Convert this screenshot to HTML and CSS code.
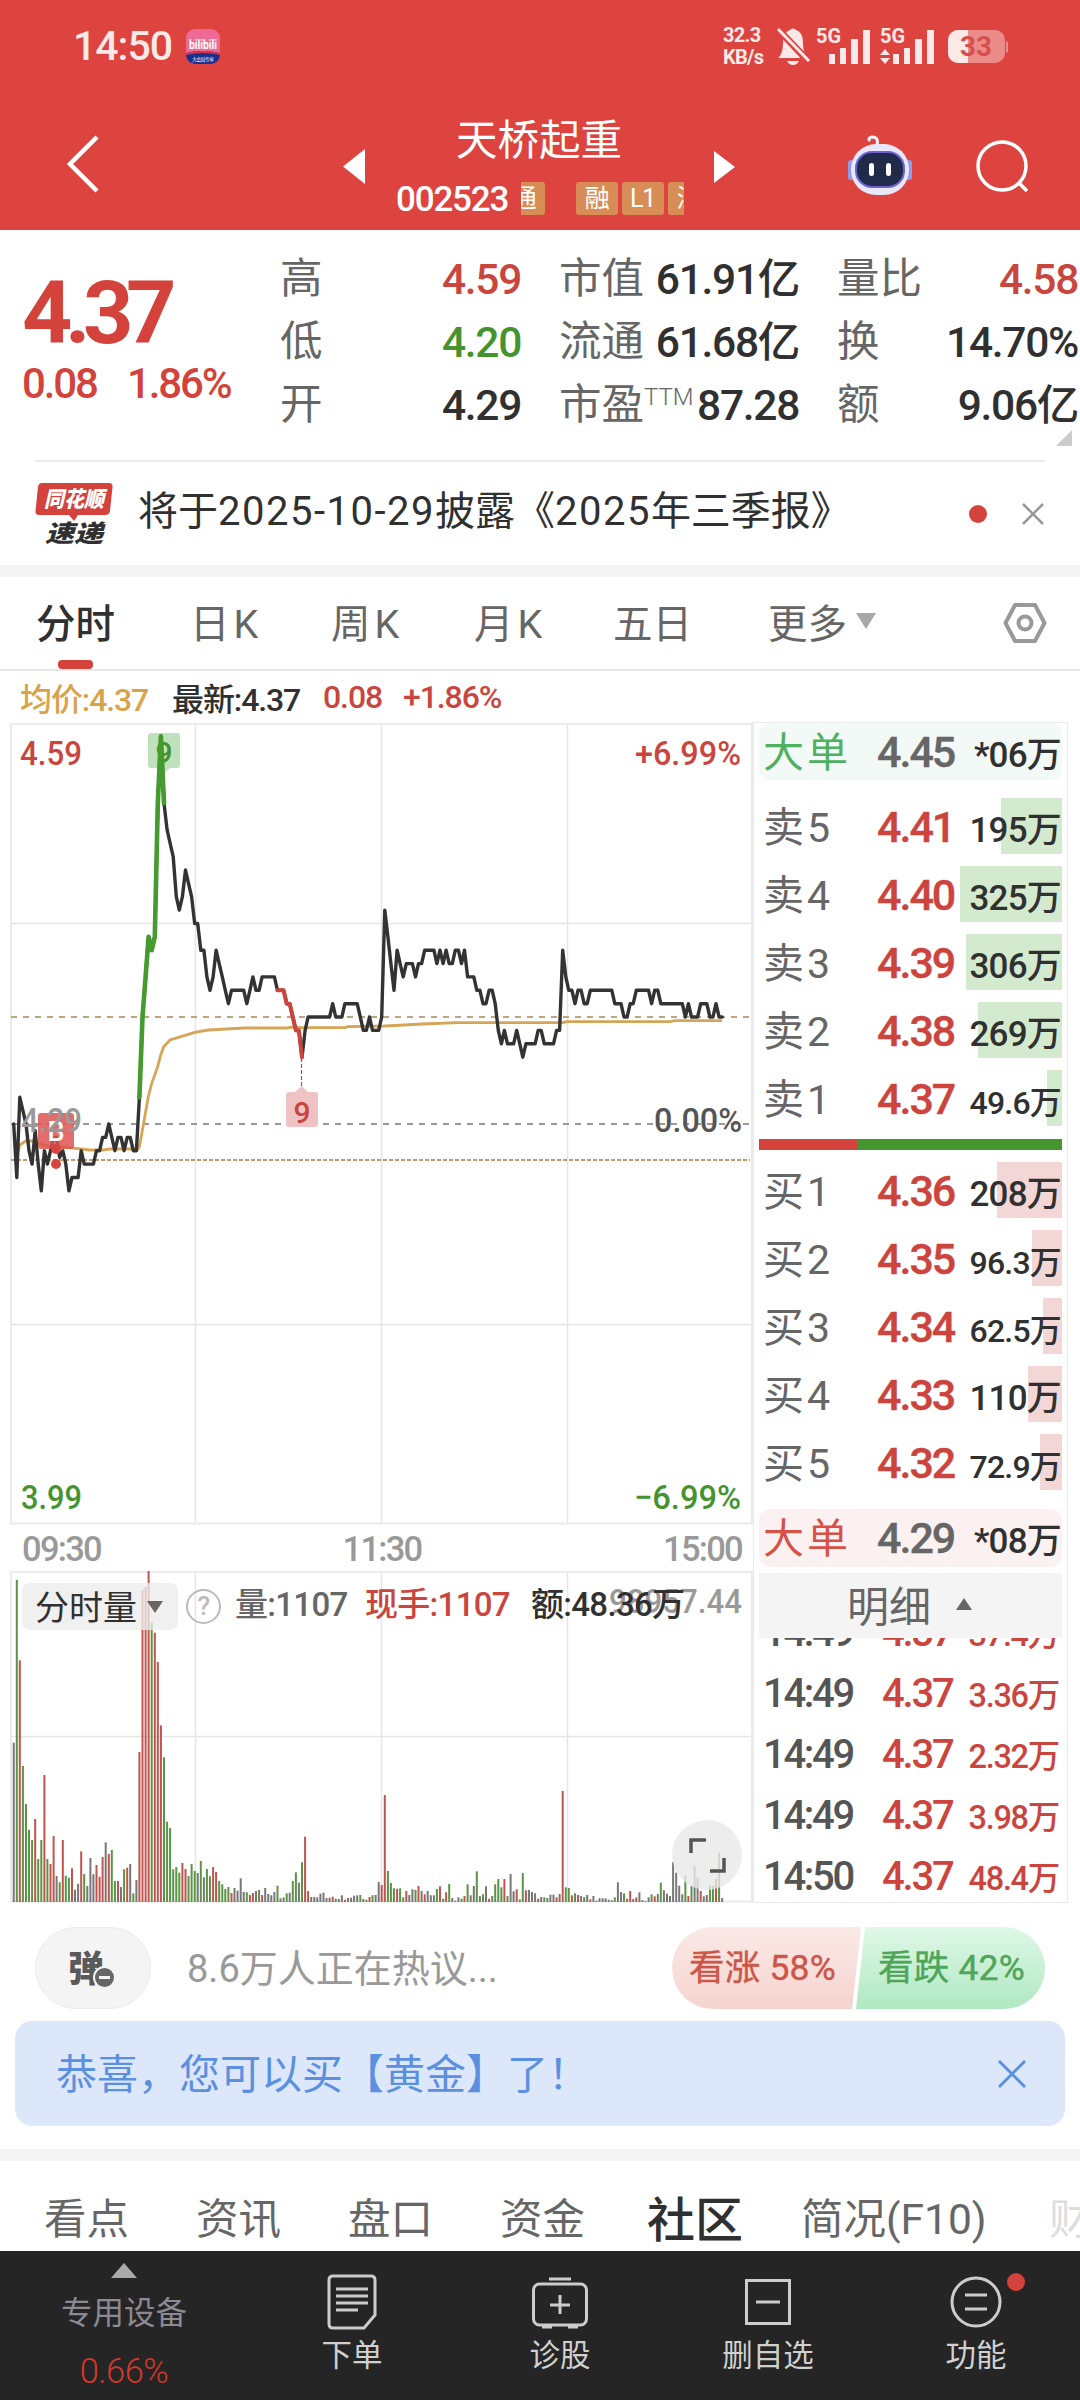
FILE: index.html
```html
<!DOCTYPE html>
<html lang="zh-CN">
<head>
  <meta charset="UTF-8">
  <meta name="viewport" content="width=device-width, initial-scale=1.0">
  <title>天桥起重 002523</title>
  <link rel="stylesheet" href="styles.css">
</head>
<body>
  <header class="top">
    <div class="status">
      <span class="clock">14:50</span>
      <svg class="app-icon" width="34" height="35" viewBox="0 0 34 35">
        <defs><clipPath id="app"><rect width="34" height="35" rx="9"/></clipPath></defs>
        <g clip-path="url(#app)">
          <rect width="34" height="35" fill="#ee6a95"/>
          <path d="M0 24 Q17 20 34 24 V35 H0Z" fill="#1b2f8c"/>
          <path d="M0 24 Q17 20 34 24 V26 Q17 22 0 26Z" fill="#d8354f"/>
        </g>
        <text x="17" y="20" class="app-name" textLength="28" lengthAdjust="spacingAndGlyphs">bilibili</text>
        <text x="17" y="32" class="app-sub" textLength="22">大会员专享</text>
      </svg>
      <div class="status-right">
        <div class="speed"><span>32.3</span><span>KB/s</span></div>
        <svg width="232" height="40" viewBox="776 25 232 40">
          <g fill="#fbe9e8">
            <path d="M778 57 Q783 53 783 42 Q783 31 790 29 Q793 26 796 29 Q803 31 803 42 Q803 53 808 57Z"/>
            <path d="M787 60 h12 q-2 4 -6 4 t-6 -4z"/>
            <path d="M829 53h6v10h-6zM840 47h6v16h-6zM851 38h7v25h-7zM863 29h7v34h-7z"/>
            <path d="M893 53h6v10h-6zM904 47h6v16h-6zM915 38h7v25h-7zM927 29h7v34h-7z"/>
            <path d="M880 54l5-6 5 6zM880 57l5 6 5-6z"/>
          </g>
          <path d="M776 26 L810 62" stroke="#dd4440" stroke-width="7"/>
          <path d="M778 28 L809 60" stroke="#fbe9e8" stroke-width="3"/>
          <text x="816" y="42" class="g5" textLength="25" lengthAdjust="spacingAndGlyphs">5G</text>
          <text x="880" y="42" class="g5" textLength="25" lengthAdjust="spacingAndGlyphs">5G</text>
          <rect x="948" y="29" width="57" height="33" rx="10" fill="#ec8c8a"/>
          <path d="M958 29 H968 V62 H958 A10 10 0 0 1 948 52 V39 A10 10 0 0 1 958 29Z" fill="#fbe9e8"/>
          <path d="M1006 40 q3 1 3 6 t-3 6z" fill="#ec8c8a"/>
          <text x="960" y="55" class="battery" textLength="32" lengthAdjust="spacingAndGlyphs">33</text>
        </svg>
      </div>
    </div>
    <div class="titlebar">
      <svg class="back" width="40" height="60" viewBox="0 0 40 60"><path d="M33 3 L6 30 L33 57" fill="none" stroke="#fff" stroke-width="4.500"/></svg>
      <svg class="prev" width="22" height="36" viewBox="0 0 22 36"><path d="M22 0V35L0 17.5Z" fill="#fff"/></svg>
      <div class="stock">
        <h1>天桥起重</h1>
        <div class="code">
          <span>002523</span>
          <div class="tags"><b class="cut">通</b><b>融</b><b>L1</b><b>深</b></div>
        </div>
      </div>
      <svg class="next" width="22" height="36" viewBox="0 0 22 36"><path d="M0 2V34L21 18Z" fill="#fff"/></svg>
      <svg class="robot" width="64" height="62" viewBox="0 0 64 62">
        <path d="M29 10 Q31 2 24 2 Q19 3 22 6" fill="none" stroke="#f3f1fb" stroke-width="3"/>
        <rect x="0" y="25" width="7" height="20" rx="3" fill="#8f9de8"/>
        <rect x="57" y="25" width="7" height="20" rx="3" fill="#8f9de8"/>
        <rect x="3" y="9" width="58" height="51" rx="25" fill="#e9e8fa"/>
        <rect x="8" y="17" width="48" height="35" rx="16" fill="#202a49" stroke="#6d63d6" stroke-width="2"/>
        <rect x="21" y="28" width="5" height="13" rx="2.5" fill="#fff"/>
        <rect x="38" y="28" width="5" height="13" rx="2.5" fill="#fff"/>
      </svg>
      <svg class="search" width="56" height="56" viewBox="0 0 56 56"><g fill="none" stroke="#fff" stroke-width="3.5"><circle cx="26" cy="26" r="24"/><path d="M42 42 L51 51"/></g></svg>
    </div>
  </header>

  <section class="quote">
    <div class="last">
      <div class="price">4.37</div>
      <div class="change"><span>0.08</span><span>1.86%</span></div>
    </div>
    <dl class="stats">
      <div><dt>高</dt><dd class="up">4.59</dd></div>
      <div><dt>市值</dt><dd>61.91亿</dd></div>
      <div><dt>量比</dt><dd class="up">4.58</dd></div>
      <div><dt>低</dt><dd class="down">4.20</dd></div>
      <div><dt>流通</dt><dd>61.68亿</dd></div>
      <div><dt>换</dt><dd>14.70%</dd></div>
      <div><dt>开</dt><dd>4.29</dd></div>
      <div><dt>市盈<sup>TTM</sup></dt><dd>87.28</dd></div>
      <div><dt>额</dt><dd>9.06亿</dd></div>
    </dl>
    <i class="corner"></i>
  </section>

  <section class="notice">
    <svg width="80" height="64" viewBox="0 0 80 64">
      <path d="M7 1 H74 Q78 1 77.500 5 L75 29 Q74.500 33 70 33 H43 L39 39 L34 33 H4 Q0 33 .5 29 L3 5 Q3.500 1 7 1Z" fill="#d3423b"/>
      <text x="39" y="25" class="logo-top" textLength="60" lengthAdjust="spacingAndGlyphs">同花顺</text>
      <text x="39" y="60" class="logo-bottom" textLength="58" lengthAdjust="spacingAndGlyphs">速递</text>
    </svg>
    <p>将于<span class="date">2025-10-29</span>披露《<span class="date">2025</span>年三季报》</p>
    <i class="dot"></i>
    <svg class="close" width="24" height="24" viewBox="0 0 24 24"><path d="M2 2 L22 22 M22 2 L2 22" stroke="#999" stroke-width="2.500"/></svg>
  </section>

  <nav class="periods">
    <a class="active">分时</a>
    <a class="k">日K</a>
    <a class="k">周K</a>
    <a class="k">月K</a>
    <a>五日</a>
    <a class="more">更多<svg width="20" height="16" viewBox="0 0 20 16"><path d="M0 0H20L10 16Z" fill="#a8a8a8"/></svg></a>
    <svg class="gear" width="44" height="42" viewBox="0 0 44 42"><g fill="none" stroke="#999" stroke-width="4"><path stroke-linejoin="round" d="M12 3H32L41.500 21L32 39H12L2.500 21Z"/><circle cx="22" cy="21" r="6.500"/></g></svg>
  </nav>

  <div class="legend">
    <span class="avg">均价:4.37</span>
    <span class="now">最新:4.37</span>
    <span class="up diff">0.08</span>
    <span class="up">+1.86%</span>
  </div>

  <main class="market">
    <div class="charts">
      <svg class="price-chart" width="753" height="803" viewBox="0 722 753 803">
        <g fill="none" stroke="#e6e6e6" stroke-width="1.500">
          <path d="M195.500 724V1523M381.500 724V1523M567.500 724V1523M11 923.500H752M11 1324.500H752"/>
          <rect x="11" y="724" width="741" height="799.500" stroke="#ebebeb" stroke-width="2"/>
        </g>
        <path d="M11 1017H750" stroke="#bda57c" stroke-width="2" stroke-dasharray="6 6"/>
        <path d="M11 1124H750" stroke="#999" stroke-width="2" stroke-dasharray="6 6"/>
        <path d="M11 1160H750" stroke="#c19a6b" stroke-width="2" stroke-dasharray="4 2"/>
        <path d="M151 733H177Q180 733 180 736V765Q180 768 177 768H170L164 773L158 768H151Q148 768 148 765V736Q148 733 151 733Z" fill="#bfe2bc"/>
        <text x="164" y="763" class="nine green">9</text>
        <polyline class="avg-line" points="18,1152 19.700,1145 25.700,1141 33,1141 46.700,1146 66.700,1147.300 90,1150 103,1150 110,1149 138,1149 139.500,1146 143.300,1125 148.300,1096.700 151.700,1083.300 157.700,1066.700 160.700,1055 163.700,1046.700 170,1040 181.700,1036.300 194.700,1032.300 208.300,1030 245,1028 286.700,1028 293,1027 301.700,1027.700 345,1027.700 348,1026.700 384.700,1026 423,1024 457,1022.700 563,1022.700 567,1021.700 670,1021.700 675,1020.700 722,1020.700"/>
        <polyline id="price" class="line"/>
        <polyline id="rise" class="line rise"/>
        <polyline id="fall" class="line fall"/>
        <path d="M301.500 1058V1087" stroke="#c9453e" stroke-width="1.200" stroke-dasharray="4 2"/>
        <path d="M289 1092H295L301.500 1086L308 1092H315Q318 1092 318 1095V1124Q318 1127 315 1127H289Q286 1127 286 1124V1095Q286 1092 289 1092Z" fill="#efc3c3"/>
        <text x="302" y="1123" class="nine red">9</text>
        <rect x="38" y="1113" width="36" height="36" rx="3" fill="#dc5550" opacity=".85"/>
        <text x="56" y="1141" class="buy">B</text>
        <circle cx="56" cy="1149" r="5" fill="#d8443e"/>
        <circle cx="56" cy="1164" r="5" fill="#d8443e"/>
        <g class="scale">
          <text x="20" y="765" fill="#c9453e" textLength="62" lengthAdjust="spacingAndGlyphs">4.59</text>
          <text x="635" y="765" fill="#c9453e" textLength="106" lengthAdjust="spacingAndGlyphs">+6.99%</text>
          <text x="21" y="1132" fill="#999" textLength="61" lengthAdjust="spacingAndGlyphs">4.29</text>
          <text x="654" y="1132" fill="#555" textLength="88" lengthAdjust="spacingAndGlyphs">0.00%</text>
          <text x="21" y="1509" fill="#45932f" textLength="61" lengthAdjust="spacingAndGlyphs">3.99</text>
          <text x="634" y="1509" fill="#45932f" textLength="107" lengthAdjust="spacingAndGlyphs">−6.99%</text>
        </g>
      </svg>
      <div class="hours"><span>09:30</span><span>11:30</span><span>15:00</span></div>
      <div class="volume">
        <svg width="753" height="332" viewBox="0 1571 753 332">
          <g fill="none" stroke="#e6e6e6" stroke-width="1.500">
            <path d="M195.500 1572V1902M381.500 1572V1902M567.500 1572V1902M11 1736.500H752"/>
            <rect x="11" y="1572" width="741" height="329.500" stroke="#ebebeb" stroke-width="2"/>
          </g>
          <g id="bars"></g>
          <text x="609" y="1613" class="scale" fill="#999" textLength="133" lengthAdjust="spacingAndGlyphs">98957.44</text>
        </svg>
        <div class="volume-bar">
          <button class="picker">分时量<svg width="16" height="12" viewBox="0 0 16 12"><path d="M0 0H16L8 12Z" fill="#666"/></svg></button>
          <span class="help">?</span>
          <span class="v-total">量:1107</span>
          <span class="v-now up">现手:1107</span>
          <span class="v-sum">额:48.36万</span>
        </div>
        <button class="expand"><svg width="40" height="40" viewBox="0 0 40 40"><path d="M4 18V5H19M23 36H37V23" fill="none" stroke="#555" stroke-width="3.500"/></svg></button>
      </div>
    </div>

    <aside class="book">
      <div class="row big sell"><span>大单</span><b>4.45</b><em>*06万</em></div>
      <div class="side asks">
        <div class="row"><i style="width:61px"></i><span>卖5</span><b>4.41</b><em>195万</em></div>
        <div class="row"><i style="width:102px"></i><span>卖4</span><b>4.40</b><em>325万</em></div>
        <div class="row"><i style="width:96px"></i><span>卖3</span><b>4.39</b><em>306万</em></div>
        <div class="row"><i style="width:84px"></i><span>卖2</span><b>4.38</b><em>269万</em></div>
        <div class="row"><i style="width:15px"></i><span>卖1</span><b>4.37</b><em class="sm">49.6万</em></div>
      </div>
      <div class="ratio"><i style="width:98px"></i></div>
      <div class="side bids">
        <div class="row"><i style="width:65px"></i><span>买1</span><b>4.36</b><em>208万</em></div>
        <div class="row"><i style="width:30px"></i><span>买2</span><b>4.35</b><em class="sm">96.3万</em></div>
        <div class="row"><i style="width:19px"></i><span>买3</span><b>4.34</b><em class="sm">62.5万</em></div>
        <div class="row"><i style="width:34px"></i><span>买4</span><b>4.33</b><em>110万</em></div>
        <div class="row"><i style="width:22px"></i><span>买5</span><b>4.32</b><em class="sm">72.9万</em></div>
      </div>
      <div class="row big buyer"><span>大单</span><b>4.29</b><em>*08万</em></div>
      <div class="detail">明细<svg width="16" height="12" viewBox="0 0 16 12"><path d="M0 12H16L8 0Z" fill="#666"/></svg></div>
      <div class="ticks">
        <div><span>14:49</span><b>4.37</b><em>37.4万</em></div>
        <div><span>14:49</span><b>4.37</b><em>3.36万</em></div>
        <div><span>14:49</span><b>4.37</b><em>2.32万</em></div>
        <div><span>14:49</span><b>4.37</b><em>3.98万</em></div>
        <div><span>14:50</span><b>4.37</b><em>48.4万</em></div>
      </div>
    </aside>
  </main>

  <section class="talk">
    <button class="danmu">弹<i></i></button>
    <p>8.6万人正在热议...</p>
    <div class="vote"><span class="bull">看涨 58%</span><span class="bear">看跌 42%</span></div>
  </section>

  <div class="promo">
    <span>恭喜，您可以买【黄金】了！</span>
    <svg width="30" height="30" viewBox="0 0 30 30"><path d="M2 2L28 28M28 2L2 28" stroke="#5b8fe0" stroke-width="3"/></svg>
  </div>

  <nav class="sections">
    <a>看点</a><a>资讯</a><a>盘口</a><a>资金</a><a class="active">社区</a><a class="brief">简况(F10)</a><a class="faded">财务</a>
  </nav>

  <footer class="dock">
    <div class="sector">
      <svg width="26" height="15" viewBox="0 0 26 15"><path d="M0 15H26L13 0Z" fill="#aaa"/></svg>
      <span>专用设备</span>
      <b>0.66%</b>
    </div>
    <a>
      <svg width="60" height="60" viewBox="0 0 60 60"><g fill="none" stroke="#ccc" stroke-width="3"><path d="M11 4H49Q53 4 53 8V43L42 56H11Q7 56 7 52V8Q7 4 11 4Z"/><path d="M14 17H46M14 24H46M14 31H46M14 38H36"/></g></svg>
      下单
    </a>
    <a>
      <svg width="60" height="60" viewBox="0 0 60 60"><g fill="none" stroke="#ccc" stroke-width="3"><rect x="3.500" y="12" width="53" height="41" rx="6"/><path d="M19 7H41M30 23V42M20 33H40M12 55H22M38 55H48"/></g></svg>
      诊股
    </a>
    <a>
      <svg width="60" height="60" viewBox="0 0 60 60"><g fill="none" stroke="#ccc" stroke-width="3"><rect x="8.500" y="8.500" width="43" height="43"/><path d="M18 30H42"/></g></svg>
      删自选
    </a>
    <a class="func">
      <svg width="60" height="60" viewBox="0 0 60 60"><g fill="none" stroke="#ccc" stroke-width="3"><circle cx="30" cy="30" r="24"/><path d="M19 23H41M19 37H41"/></g></svg>
      功能
      <i></i>
    </a>
  </footer>
  <script src="chart.js"></script>
</body>
</html>
```
FILE: styles.css
```css
:root {
  --red: #c9453e;
  --green: #45932f;
  --ink: #303030;
  --grey: #666;
}

* {
  box-sizing: border-box;
}

body {
  margin: 0;
  width: 1080px;
  height: 2400px;
  overflow: hidden;
  background: #fff;
  color: var(--ink);
  font-family: Roboto, "Noto Sans CJK SC", sans-serif;
}

h1, p, dl, dd {
  margin: 0;
  font-weight: 400;
}

i, em {
  font-style: normal;
}

button {
  border: 0;
  padding: 0;
  font-family: inherit;
}

svg {
  display: block;
  flex: none;
}

.up { color: var(--red) !important; }
.down { color: var(--green) !important; }

/* header */
.top {
  height: 230px;
  background: #dd4440;
  color: #fff;
}

.status {
  display: flex;
  align-items: center;
  height: 92px;
  padding: 0 72px 0 73px;
  color: #fbe9e8;
}

.clock {
  width: 113px;
  font-size: 41px;
  font-weight: 500;
  letter-spacing: -1px;
}

.app-name {
  fill: #fff;
  font-size: 13px;
  font-weight: 700;
  text-anchor: middle;
}

.app-sub {
  fill: #fff;
  font-size: 5px;
  text-anchor: middle;
}

.status-right {
  display: flex;
  align-items: center;
  gap: 10px;
  margin-left: auto;
}

.speed {
  display: flex;
  flex-direction: column;
  width: 43px;
  font-size: 20px;
  font-weight: 700;
  line-height: 22px;
  letter-spacing: -.7px;
}

.g5 {
  fill: #fbe9e8;
  font-size: 21px;
  font-weight: 700;
}

.battery {
  fill: #d5504c;
  font-size: 27px;
  font-weight: 700;
}

.titlebar {
  display: flex;
  height: 138px;
}

.back { margin: 42px 0 0 64px; }
.prev { margin: 57px 0 0 239px; }
.next { margin: 57px 0 0 30px; }
.robot { margin: 43px 0 0 112px; }
.search { margin: 48px 0 0 64px; }

.stock {
  width: 288px;
  margin-left: 31px;
  padding-top: 19px;
}

.stock h1 {
  padding-left: 60px;
  font-size: 41.5px;
  line-height: 60px;
}

.code {
  display: flex;
  align-items: center;
  height: 44px;
  margin-top: 6px;
  font-size: 35px;
  font-weight: 500;
  letter-spacing: -1.2px;
}

.code > span {
  width: 125px;
}

.tags {
  display: flex;
  gap: 4px;
  width: 164px;
  margin-top: -2px;
  overflow: hidden;
}

.tags b {
  flex: none;
  width: 42px;
  height: 33px;
  border-radius: 3px;
  background: #d98d56;
  font-size: 25px;
  font-weight: 400;
  line-height: 33px;
  text-align: center;
}

.tags .cut {
  margin: 0 27px 0 -18px;
}

/* quote */
.quote {
  position: relative;
  display: flex;
  height: 230px;
}

.last {
  width: 280px;
  padding: 34px 0 0 22px;
  color: #d3423b;
}

.price {
  height: 98px;
  font-size: 88px;
  font-weight: 700;
  line-height: 98px;
  letter-spacing: -7.5px;
}

.change {
  display: flex;
  gap: 30px;
  margin-top: -2px;
  font-size: 42px;
  font-weight: 500;
  line-height: 48px;
  letter-spacing: -2.1px;
}

.stats {
  display: grid;
  grid-template-columns: 243px 242px 243px;
  grid-auto-rows: 63px;
  column-gap: 36px;
  padding-top: 17px;
}

.stats div {
  display: flex;
  justify-content: space-between;
  line-height: 63px;
  white-space: nowrap;
}

.stats dt {
  color: var(--grey);
  font-size: 42.5px;
}

.stats sup {
  display: inline-block;
  font-size: 24px;
  font-weight: 300;
  line-height: 1;
  vertical-align: 14px;
}

.stats dd {
  padding: 1px 2px 0 0;
  font-size: 42.5px;
  font-weight: 500;
  letter-spacing: -1.3px;
}

.corner {
  position: absolute;
  right: 8px;
  bottom: 14px;
  border: 8px solid #ccc;
  border-top-color: transparent;
  border-left-color: transparent;
}

/* notice */
.notice {
  display: flex;
  align-items: center;
  height: 105px;
  margin: 0 35px;
  border-top: 2px solid #ededed;
}

.logo-top, .logo-bottom {
  fill: #fff;
  font-size: 22px;
  font-weight: 900;
  font-style: italic;
  text-anchor: middle;
}

.logo-bottom {
  fill: var(--ink);
  font-size: 24px;
}

.notice p {
  flex: 1;
  padding: 0 0 3px 23px;
  font-size: 40px;
  line-height: 60px;
  white-space: nowrap;
}

.date {
  letter-spacing: 1.5px;
}

.dot {
  width: 18px;
  height: 18px;
  border-radius: 50%;
  background: #d3423b;
}

.close {
  margin-left: 34px;
}

/* period tabs */
.periods {
  display: flex;
  align-items: center;
  height: 106px;
  padding: 0 0 1px 36px;
  border-top: 12px solid #f4f4f4;
  border-bottom: 2px solid #e8e8e8;
  color: var(--grey);
  font-size: 39.5px;
  white-space: nowrap;
}

.periods a {
  position: relative;
  width: 141px;
  padding-bottom: 4px;
}

.periods a:first-child { width: 154px; }
.periods a:nth-child(3) { width: 143px; }
.periods a:nth-child(4) { width: 139px; }
.periods a:nth-child(5) { width: 155px; }

.periods .k {
  letter-spacing: 4px;
}

.periods .active {
  color: var(--ink);
  font-weight: 500;
}

.periods .active::after {
  content: "";
  position: absolute;
  left: 22px;
  bottom: -16px;
  width: 35px;
  height: 9px;
  border-radius: 4px;
  background: #d3423b;
}

.periods .more {
  display: flex;
  align-items: center;
  gap: 9px;
  width: 235px;
}

/* legend */
.legend {
  display: flex;
  align-items: center;
  height: 51px;
  padding-left: 20px;
  font-size: 32px;
  font-weight: 500;
  letter-spacing: -1.1px;
}

.legend .avg { width: 152px; color: #d9a349; }
.legend .now { width: 151px; }
.legend .diff { width: 80px; }

/* charts */
.market {
  display: flex;
  height: 1181px;
}

.charts {
  width: 753px;
}

.line {
  fill: none;
  stroke: #333;
  stroke-width: 3.4;
  stroke-linejoin: round;
  stroke-linecap: round;
}

.rise { stroke: #459a30; stroke-width: 4.6; }
.fall { stroke: #c9453e; stroke-width: 4; }

.avg-line {
  fill: none;
  stroke: #d6a456;
  stroke-width: 2.8;
}

.nine, .buy {
  font-size: 30px;
  font-weight: 500;
  text-anchor: middle;
}

.nine.green { fill: var(--green); }
.nine.red { fill: var(--red); }
.buy { fill: #fff; font-size: 27px; }

.scale {
  font-size: 34px;
  font-weight: 500;
}

.hours {
  display: flex;
  justify-content: space-between;
  height: 46px;
  padding: 0 11px 0 22px;
  color: #999;
  font-size: 34.5px;
  font-weight: 500;
  line-height: 49px;
  letter-spacing: -1.7px;
}

.volume {
  position: relative;
  height: 332px;
}

.volume-bar {
  position: absolute;
  top: 12px;
  left: 22px;
  display: flex;
  align-items: center;
  height: 47px;
  font-size: 33px;
  font-weight: 500;
  line-height: 43px;
  letter-spacing: -.7px;
  white-space: nowrap;
}

.volume-bar > span:not(.help) {
  padding-bottom: 4px;
}

.picker {
  display: flex;
  align-items: center;
  gap: 10px;
  width: 156px;
  height: 47px;
  padding: 0 0 3px 13px;
  border-radius: 8px;
  background: rgba(236, 236, 236, .78);
  color: var(--ink);
  font-size: 34px;
}

.picker svg {
  margin-top: 3px;
}

.help {
  width: 35px;
  height: 35px;
  margin: 0 14px 0 8px;
  border: 2.5px solid #bbb;
  border-radius: 50%;
  color: #bbb;
  font-size: 26px;
  line-height: 30px;
  text-align: center;
}

.v-total { width: 130px; color: var(--grey); }
.v-now { width: 166px; }

.expand {
  position: absolute;
  left: 672px;
  top: 249px;
  display: grid;
  place-items: center;
  width: 70px;
  height: 70px;
  border-radius: 50%;
  background: rgba(232, 232, 232, .8);
}

/* order book */
.book {
  width: 315px;
  padding: 0 5px;
  border: 1px solid #eaeaea;
}

.row {
  position: relative;
  display: grid;
  grid-template-columns: 114px 82px 1fr;
  align-items: baseline;
  height: 56px;
  padding: 0 1px 0 4px;
  line-height: 59px;
  white-space: nowrap;
}

.row span {
  position: relative;
  color: var(--grey);
  font-size: 41px;
  letter-spacing: 3px;
}

.row b {
  position: relative;
  color: #cc443d;
  font-size: 43px;
  font-weight: 500;
  letter-spacing: -2px;
  -webkit-text-stroke: .4px;
}

.row em {
  position: relative;
  font-size: 35px;
  font-weight: 500;
  letter-spacing: -.8px;
  text-align: right;
}

.row .sm {
  font-size: 32px;
}

.row i {
  position: absolute;
  top: 0;
  right: 0;
  bottom: 0;
}

.big {
  height: 57px;
  border-radius: 11px;
}

.big b { color: var(--grey); }
.big.sell { background: #f3f9f6; }
.big.sell span { color: #4fb061; }
.big.buyer { height: 58px; background: #fcf1f1; }
.big.buyer span { color: #d65148; }

.side {
  display: flex;
  flex-direction: column;
  gap: 12px;
}

.asks { padding: 18px 0 13px; }
.asks i { background: #d3eacf; }
.bids { padding: 12px 0 19px; }
.bids i { background: #f3d6d6; }

.ratio {
  height: 11px;
  background: #45962f;
}

.ratio i {
  display: block;
  height: 11px;
  background: #d3423b;
}

.detail {
  position: relative;
  display: flex;
  align-items: center;
  gap: 25px;
  height: 65px;
  margin-top: 6px;
  padding: 0 0 4px 88px;
  background: #f4f4f4;
  color: var(--grey);
  font-size: 42px;
}

.ticks {
  height: 264px;
  overflow: hidden;
}

.ticks div {
  display: grid;
  grid-template-columns: 119px 78px 1fr;
  align-items: baseline;
  height: 61px;
  padding: 0 3px 0 4px;
  line-height: 64px;
}

.ticks div:first-child {
  margin-top: -37px;
}

.ticks span {
  color: #555;
  font-size: 40px;
  font-weight: 500;
  letter-spacing: -2.3px;
}

.ticks b {
  color: #cc443d;
  font-size: 40px;
  font-weight: 500;
  letter-spacing: -2.2px;
}

.ticks em {
  color: var(--red);
  font-size: 32.5px;
  font-weight: 500;
  letter-spacing: -1.3px;
  text-align: right;
}

/* discussion */
.talk {
  display: flex;
  align-items: center;
  height: 118px;
  padding: 12px 35px 0;
}

.danmu {
  position: relative;
  width: 116px;
  height: 82px;
  padding: 0 14px 5px 0;
  border: 1px solid #ebebeb;
  border-radius: 41px;
  background: #f4f4f4;
  color: #5a5a5a;
  font-size: 36px;
  font-weight: 900;
}

.danmu i {
  position: absolute;
  left: 57px;
  top: 38px;
  width: 23px;
  height: 23px;
  border: 2px solid #f4f4f4;
  border-radius: 50%;
  background: linear-gradient(#f4f4f4, #f4f4f4) center / 11px 3px no-repeat #666;
}

.talk p {
  flex: 1;
  padding: 0 0 5px 36px;
  color: #999;
  font-size: 38px;
}

.vote {
  display: flex;
  width: 373px;
  height: 82px;
  border-radius: 41px;
  overflow: hidden;
  font-size: 35.5px;
  line-height: 83px;
  letter-spacing: .2px;
  white-space: nowrap;
  -webkit-text-stroke: .4px;
}

.bull {
  width: 189px;
  padding-left: 17px;
  background: linear-gradient(#fae9e6, #f6d4d0);
  clip-path: polygon(0 0, 100% 0, calc(100% - 9px) 100%, 0 100%);
  color: #cc5647;
}

.bear {
  flex: 1;
  margin-left: -5px;
  padding-left: 22px;
  background: linear-gradient(#dff8e7, #b0e8c3);
  clip-path: polygon(9px 0, 100% 0, 100% 100%, 0 100%);
  color: #4fa558;
}

.promo {
  display: flex;
  align-items: center;
  justify-content: space-between;
  height: 105px;
  margin: 0 15px 23px;
  padding: 0 38px 0 41px;
  border-radius: 17px;
  background: #dce7fa;
  color: #5b8fe0;
  font-size: 41px;
}

.promo span {
  padding-bottom: 5px;
}

/* section tabs */
.sections {
  display: flex;
  align-items: center;
  height: 102px;
  padding: 19px 0 0 44px;
  border-top: 12px solid #f4f4f4;
  color: var(--grey);
  font-size: 42.5px;
  white-space: nowrap;
  overflow: hidden;
}

.sections a {
  flex: none;
  width: 152px;
}

.sections a:nth-child(4) { width: 147px; }

.sections .active {
  width: 154px;
  color: var(--ink);
  font-size: 48px;
  font-weight: 500;
}

.sections .brief { width: 248px; }
.sections .faded { color: #ddd; }

/* dock */
.dock {
  display: grid;
  grid-template-columns: 248px repeat(4, 208px);
  height: 149px;
  background: #252525;
  color: #d0d0d0;
  font-size: 30.5px;
}

.dock a {
  position: relative;
  display: flex;
  flex-direction: column;
  align-items: center;
  padding-top: 21px;
  line-height: 47px;
}

.func i {
  position: absolute;
  top: 22px;
  right: 55px;
  width: 18px;
  height: 18px;
  border-radius: 50%;
  background: #d3423b;
}

.sector {
  display: flex;
  flex-direction: column;
  align-items: center;
  padding-top: 12px;
}

.sector span {
  margin-top: 14px;
  color: #8b8a92;
  font-size: 31.5px;
  line-height: 44px;
}

.sector b {
  margin-top: 13px;
  color: #d4382b;
  font-size: 34.5px;
  font-weight: 300;
  line-height: 44px;
  letter-spacing: -.5px;
}
```
FILE: chart.js
```js
// minute prices, in cents away from the previous close of 4.29
const cents = [
  0, -4, 2, 1, 0, -2, -3, -.5, -3, -5, -2, -3, -2, -1, -1, -2.5, -2, -3, -5, -4,
  -4, -4, -2, -3, -3, -3, -3, -2, -2, -1, -1, 0, -1, -2, -1, -1, -2, -1, -1, -2,
  -2, 2, 8, 11, 14, 13, 14, 24, 29, 24, 22, 21, 20, 17, 16, 17, 19, 18, 17, 15,
  15, 13, 13, 11, 10, 11, 13, 12, 11, 10, 9, 10, 10, 10, 10, 10, 9, 10, 11, 10,
  10, 11, 11, 11, 11, 11, 10, 10, 10, 9, 9, 8, 7, 7, 5, 7, 8, 8, 8, 8,
  8, 8, 8, 8, 9, 8, 8, 8, 9, 9, 9, 9, 9, 8, 7, 7, 8, 7, 7, 7,
  8, 16, 14, 12, 10, 13, 12, 11, 12, 12, 12, 11, 12, 12, 13, 13, 13, 13, 12, 13,
  12, 13, 12, 12, 13, 13, 12, 13, 11, 11, 11, 10, 10, 9, 9, 10, 10, 9, 7, 6,
  7, 6, 6, 6, 7, 6, 5, 6, 6, 6, 6, 7, 7, 6, 6, 6, 6, 7, 7, 13,
  11, 10, 10, 9, 10, 10, 9, 9, 10, 10, 10, 10, 10, 10, 10, 10, 9, 9, 9, 8,
  8, 9, 9, 10, 10, 10, 10, 10, 9, 10, 10, 9, 9, 9, 9, 9, 9, 9, 9, 8,
  9, 8, 8, 8, 9, 9, 9, 8, 8, 9, 8, 8
];

// minute volume, coloured by direction: r up, g down, k flat
const volume = `k478 g966 r725 g408 g294 g217 g186 r249 g129 g186 r381 g129 r114 r198 k78 g59 r186 g79 g73 r101
k37 k55 r152 g84 k48 k132 k83 r111 r76 r135 k179 r144 g156 g63 r63 k45 g98 r103 k114 g26
k66 r450 r936 r945 r993 g839 r808 r720 r530 g434 g241 g222 g98 g105 g88 r117 r99 g78 g114 g93
k87 g123 k74 g99 g77 r105 r90 g63 g53 g39 g45 r27 k42 k34 k71 k30 g29 r21 r27 g33
k36 r21 k42 k24 k20 k30 g49 k11 k14 g26 k28 g63 g89 k58 g119 r196 r33 k15 k15 k14
k25 k28 k12 k13 r16 g10 k9 k20 r7 k12 k13 k19 k20 g21 k9 g7 r15 g20 k21 k60
r51 r321 g93 g57 g41 r40 g41 g14 r33 k21 k38 g36 r48 k33 r23 k33 k20 k20 g39 r47
g10 r29 g54 k12 r4 k14 g10 r18 g53 k20 k48 g92 k18 g23 k47 r10 k18 g53 g69 g44
r69 g18 k84 k32 r38 g8 g87 r35 k36 k30 k26 r10 k15 g14 k12 k22 k22 r14 k24 r333
g44 g42 r20 g26 r21 k18 g15 k21 r8 k18 k4 k11 k11 k11 k7 k5 g14 k59 k30 g26
r10 r33 k9 r14 k29 k6 k3 k14 g23 r17 k24 g58 k35 k25 k18 k120 k88 k49 k23 g80
r18 g48 k108 k72 r33 k17 k21 g50 g49 r70 g148 k12`.split(/\s+/);

const colors = { r: '#c0544e', g: '#5a9444', k: '#777' };
const x = i => 13.7 + i * 3.067;
const points = cents.map((c, i) => `${x(i).toFixed(1)},${(1124 - c * 13.37).toFixed(1)}`);

document.getElementById('price').setAttribute('points', points.join(' '));
document.getElementById('rise').setAttribute('points', points.slice(41, 50).join(' '));
document.getElementById('fall').setAttribute('points', points.slice(86, 95).join(' '));

document.getElementById('bars').innerHTML = volume.map((v, i) => {
  const h = v.slice(1) / 3;
  return `<rect x="${(x(i) - 1).toFixed(1)}" y="${(1902 - h).toFixed(1)}" width="2" height="${h.toFixed(1)}" fill="${colors[v[0]]}"/>`;
}).join('');
```
